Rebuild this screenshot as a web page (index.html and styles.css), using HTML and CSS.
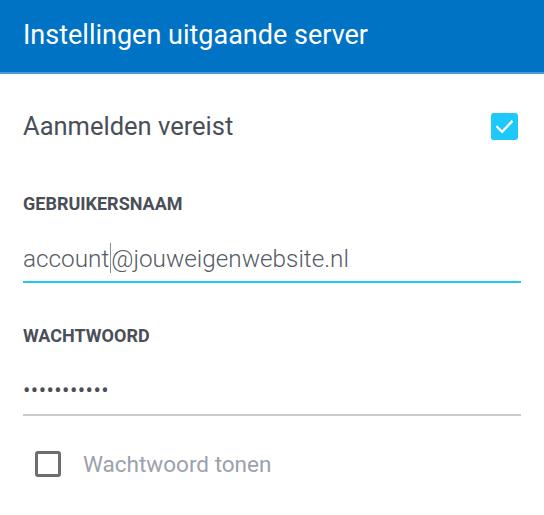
FILE: index.html
```html
<!DOCTYPE html>
<html lang="nl">
<head>
<meta charset="utf-8">
<title>Instellingen uitgaande server</title>
<link rel="stylesheet" href="styles.css">
</head>
<body>
<header class="appbar">
  <h1 class="appbar-title">Instellingen uitgaande server</h1>
</header>
<main class="content">
  <div class="toggle-row">
    <span class="toggle-label">Aanmelden vereist</span>
    <span class="check check-on">
      <svg viewBox="0 0 24 24" width="23" height="23"><path d="M4.5 12.5l5 5L19.5 7" fill="none" stroke="#fff" stroke-width="2.4" stroke-linecap="square"/></svg>
    </span>
  </div>

  <label class="field-label">GEBRUIKERSNAAM</label>
  <div class="field field-active">
    <span class="field-text">account</span><span class="caret"></span><span class="field-text">@jouweigenwebsite.nl</span>
  </div>

  <label class="field-label field-label-2">WACHTWOORD</label>
  <div class="field field-password">
    <span class="dots">•••••••••••</span>
  </div>

  <div class="show-row">
    <span class="check check-off"></span>
    <span class="show-label">Wachtwoord tonen</span>
  </div>
</main>
</body>
</html>
```

FILE: styles.css
```css
* { box-sizing: border-box; }
html, body {
  margin: 0;
  padding: 0;
  background: #ffffff;
  font-family: Roboto, "Noto Sans", "Liberation Sans", sans-serif;
}
.appbar {
  height: 74px;
  background: #0073c5;
  border-bottom: 2px solid #4a9be2;
  display: flex;
  align-items: center;
  padding: 0 23px 2px;
}
.appbar-title {
  margin: 0;
  font-size: 27px;
  font-weight: 400;
  color: #ffffff;
}
.content {
  padding: 26px 23px 0;
  display: flex;
  flex-direction: column;
}
.toggle-row {
  height: 52px;
  display: flex;
  align-items: center;
  justify-content: space-between;
  padding-right: 3px;
}
.toggle-label {
  font-size: 25.5px;
  color: #4a4f57;
}
.check {
  display: flex;
  align-items: center;
  justify-content: center;
}
.check-on {
  width: 27px;
  height: 27px;
  border-radius: 3px;
  background: #1ec8fb;
}
.field-label {
  margin-top: 42px;
  font-size: 18px;
  line-height: 20px;
  font-weight: 700;
  color: #4a4f57;
}
.field-label-2 {
  margin-top: 43px;
}
.field {
  display: flex;
  align-items: center;
}
.field-active {
  margin-top: 28px;
  height: 41px;
  padding-bottom: 7px;
  border-bottom: 2px solid #22c7f6;
  font-size: 24.3px;
  font-weight: 300;
  color: #555b64;
}
.caret {
  width: 1px;
  height: 30px;
  background: #8a8f96;
  margin: 0 0.5px;
}
.field-password {
  margin-top: 30px;
  height: 40px;
  padding-bottom: 10px;
  border-bottom: 2px solid #cbcbcb;
}
.dots {
  font-size: 22px;
  letter-spacing: 0.4px;
  color: #4a4f57;
}
.show-row {
  margin-top: 35px;
  display: flex;
  align-items: center;
  padding-left: 12px;
}
.check-off {
  width: 26px;
  height: 26px;
  border: 3px solid #6d6d6d;
  border-radius: 3px;
}
.show-label {
  margin-left: 22px;
  font-size: 22.5px;
  color: #9ba1ad;
}
```
